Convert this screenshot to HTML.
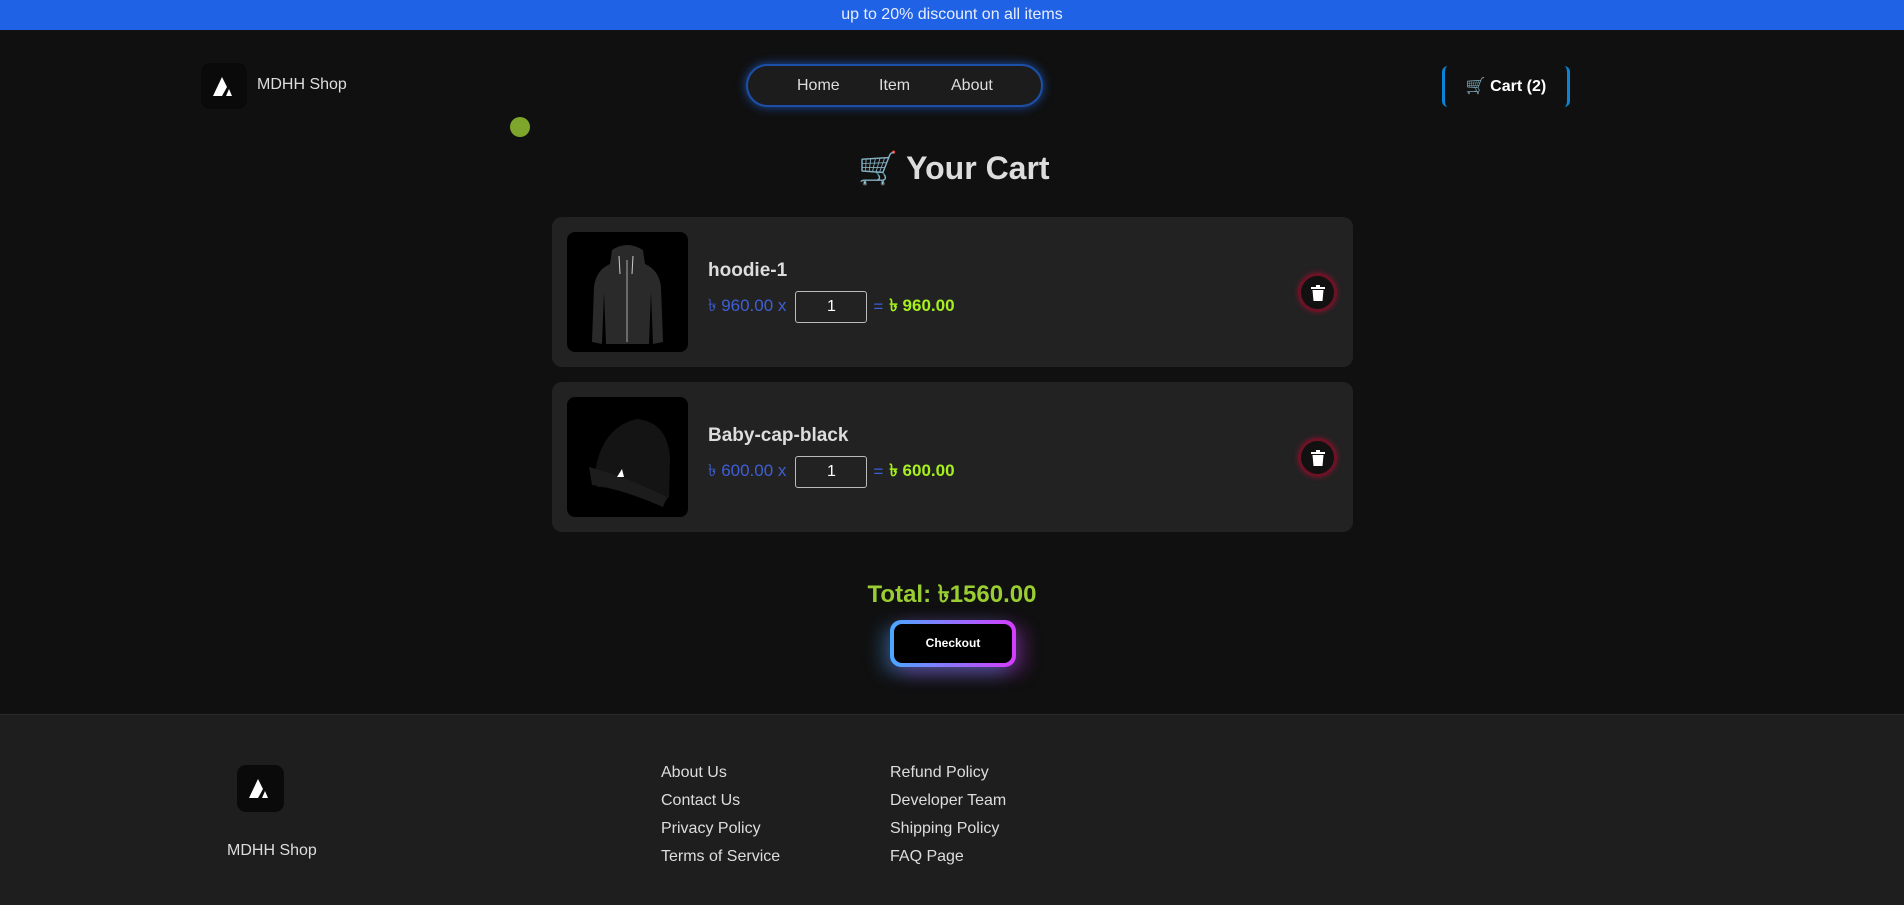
<!DOCTYPE html>
<html><head><meta charset="utf-8"><style>
*{margin:0;padding:0;box-sizing:border-box}
body{width:1904px;height:905px;background:#101010;font-family:"Liberation Sans",Arial,sans-serif;color:#ddd;position:relative;overflow:hidden}
.abs{position:absolute}
.top{left:0;top:0;width:1904px;height:30px;background:#1f62e6;color:#e8eefc;font-size:16px;text-align:center;line-height:30px}
.logo{width:46px;height:46px;background:#0a0a0a;border-radius:9px}
.logo svg{position:absolute;left:12px;top:13px}
.nav{left:746px;top:64px;width:297px;height:43px;border-radius:22px;background:#1c1c1c;border:2px solid #1d4fa8;box-shadow:0 0 10px #1d4fa8}
.nav span{position:absolute;top:11px;font-size:16px;color:#ddd}
.cart{left:1442px;top:66px;width:128px;height:41px;border-left:3px solid #0a84d6;border-right:3px solid #0a84d6;border-radius:6px;font-weight:bold;color:#fff;font-size:16px;line-height:41px;text-align:center}
.card{left:552px;width:801px;height:150px;background:#222;border-radius:10px}
.img{position:absolute;left:15px;top:15px;width:121px;height:120px;background:#000;border-radius:8px;overflow:hidden}
.name{position:absolute;left:156px;top:43px;font-size:19px;font-weight:bold;color:#ddd}
.row{position:absolute;left:156px;top:74px;height:32px;display:flex;align-items:center;font-size:17px;color:#3f5fd6}
.inp{width:72px;height:32px;border:1px solid #bbb;border-radius:3px;margin:0 6px 0 9px;color:#fff;text-align:center;line-height:30px;font-size:16px}
.tot{color:#a6f01e;font-weight:bold;margin-left:6px}
.trash{position:absolute;left:746px;top:56px;width:39px;height:39px;border-radius:50%;background:#111;border:3px solid #6b1325;box-shadow:0 0 6px #7b1830}
.trash svg{position:absolute;left:10px;top:9px}
.foot{left:0;top:714px;width:1904px;height:191px;background:#1e1e1e;border-top:1px solid #2a2a2a}
.fl{font-size:16px;color:#ddd}
</style></head><body>
<div class="abs top">up to 20% discount on all items</div>

<div class="abs logo" style="left:201px;top:63px"><svg width="22" height="20" viewBox="0 0 22 20"><polygon points="0,20 9,1 14,11 9,20" fill="#fff"/><polygon points="13,20 16,13 19,20" fill="#fff"/></svg></div>
<div class="abs" style="left:257px;top:76px;font-size:16px;color:#ddd">MDHH Shop</div>

<div class="abs nav"><span style="left:49px">Home</span><span style="left:131px">Item</span><span style="left:203px">About</span></div>
<div class="abs" style="left:510px;top:117px;width:20px;height:20px;border-radius:50%;background:#7fa62c"></div>
<div class="abs cart">🛒 Cart (2)</div>

<div class="abs" style="left:858px;top:149px;font-size:32px;font-weight:bold;color:#ddd;font-family:'Liberation Sans','DejaVu Sans',sans-serif">🛒 Your Cart</div>

<div class="abs card" style="top:217px">
 <div class="img"><svg width="121" height="120"><path d="M45 18 Q60 8 76 18 L78 32 Q92 38 94 55 L96 110 L86 112 L84 60 L82 112 L39 112 L37 60 L35 112 L25 110 L27 55 Q29 38 43 32Z" fill="#2a2a2a"/><line x1="60" y1="28" x2="60" y2="110" stroke="#aaa" stroke-width="1"/><line x1="52" y1="24" x2="53" y2="42" stroke="#ccc"/><line x1="66" y1="24" x2="65" y2="42" stroke="#ccc"/></svg></div>
 <div class="name">hoodie-1</div>
 <div class="row">৳ 960.00 x<div class="inp">1</div>= <span class="tot">৳ 960.00</span></div>
 <div class="trash"><svg width="14" height="16" viewBox="0 0 14 16"><rect x="0" y="2" width="14" height="2" fill="#fff"/><rect x="5" y="0" width="4" height="2" fill="#fff"/><path d="M1.5 5 H12.5 L11.5 16 H2.5Z" fill="#fff"/></svg></div>
</div>

<div class="abs card" style="top:382px">
 <div class="img"><svg width="121" height="120"><path d="M28 75 Q35 30 70 22 Q100 25 103 60 L102 100 L95 108 Q60 90 30 90Z" fill="#141414"/><path d="M22 70 Q60 80 100 100 L96 110 Q55 92 25 88Z" fill="#1c1c1c"/><polygon points="50,80 55,72 57,80" fill="#fff"/></svg></div>
 <div class="name">Baby-cap-black</div>
 <div class="row">৳ 600.00 x<div class="inp">1</div>= <span class="tot">৳ 600.00</span></div>
 <div class="trash"><svg width="14" height="16" viewBox="0 0 14 16"><rect x="0" y="2" width="14" height="2" fill="#fff"/><rect x="5" y="0" width="4" height="2" fill="#fff"/><path d="M1.5 5 H12.5 L11.5 16 H2.5Z" fill="#fff"/></svg></div>
</div>

<div class="abs" style="left:0;width:1904px;top:576px;text-align:center;font-size:24px;font-weight:bold;color:#9acd32">Total: ৳1560.00</div>
<div class="abs" style="left:890px;top:620px;width:126px;height:47px;border-radius:11px;background:linear-gradient(90deg,#4aa8ff,#d63cff);box-shadow:-8px 6px 18px rgba(74,168,255,.35),8px 6px 18px rgba(214,60,255,.35)">
 <div style="position:absolute;left:4px;top:4px;right:4px;bottom:4px;background:#000;border-radius:8px;color:#fff;font-size:12px;font-weight:bold;text-align:center;line-height:39px">Checkout</div>
</div>

<div class="abs foot"></div>
<div class="abs logo" style="left:237px;top:765px;width:47px;height:47px"><svg width="22" height="20" viewBox="0 0 22 20"><polygon points="0,20 9,1 14,11 9,20" fill="#fff"/><polygon points="13,20 16,13 19,20" fill="#fff"/></svg></div>
<div class="abs fl" style="left:227px;top:842px">MDHH Shop</div>
<div class="abs fl" style="left:661px;top:764px">About Us</div>
<div class="abs fl" style="left:661px;top:792px">Contact Us</div>
<div class="abs fl" style="left:661px;top:820px">Privacy Policy</div>
<div class="abs fl" style="left:661px;top:848px">Terms of Service</div>
<div class="abs fl" style="left:890px;top:764px">Refund Policy</div>
<div class="abs fl" style="left:890px;top:792px">Developer Team</div>
<div class="abs fl" style="left:890px;top:820px">Shipping Policy</div>
<div class="abs fl" style="left:890px;top:848px">FAQ Page</div>
</body></html>
